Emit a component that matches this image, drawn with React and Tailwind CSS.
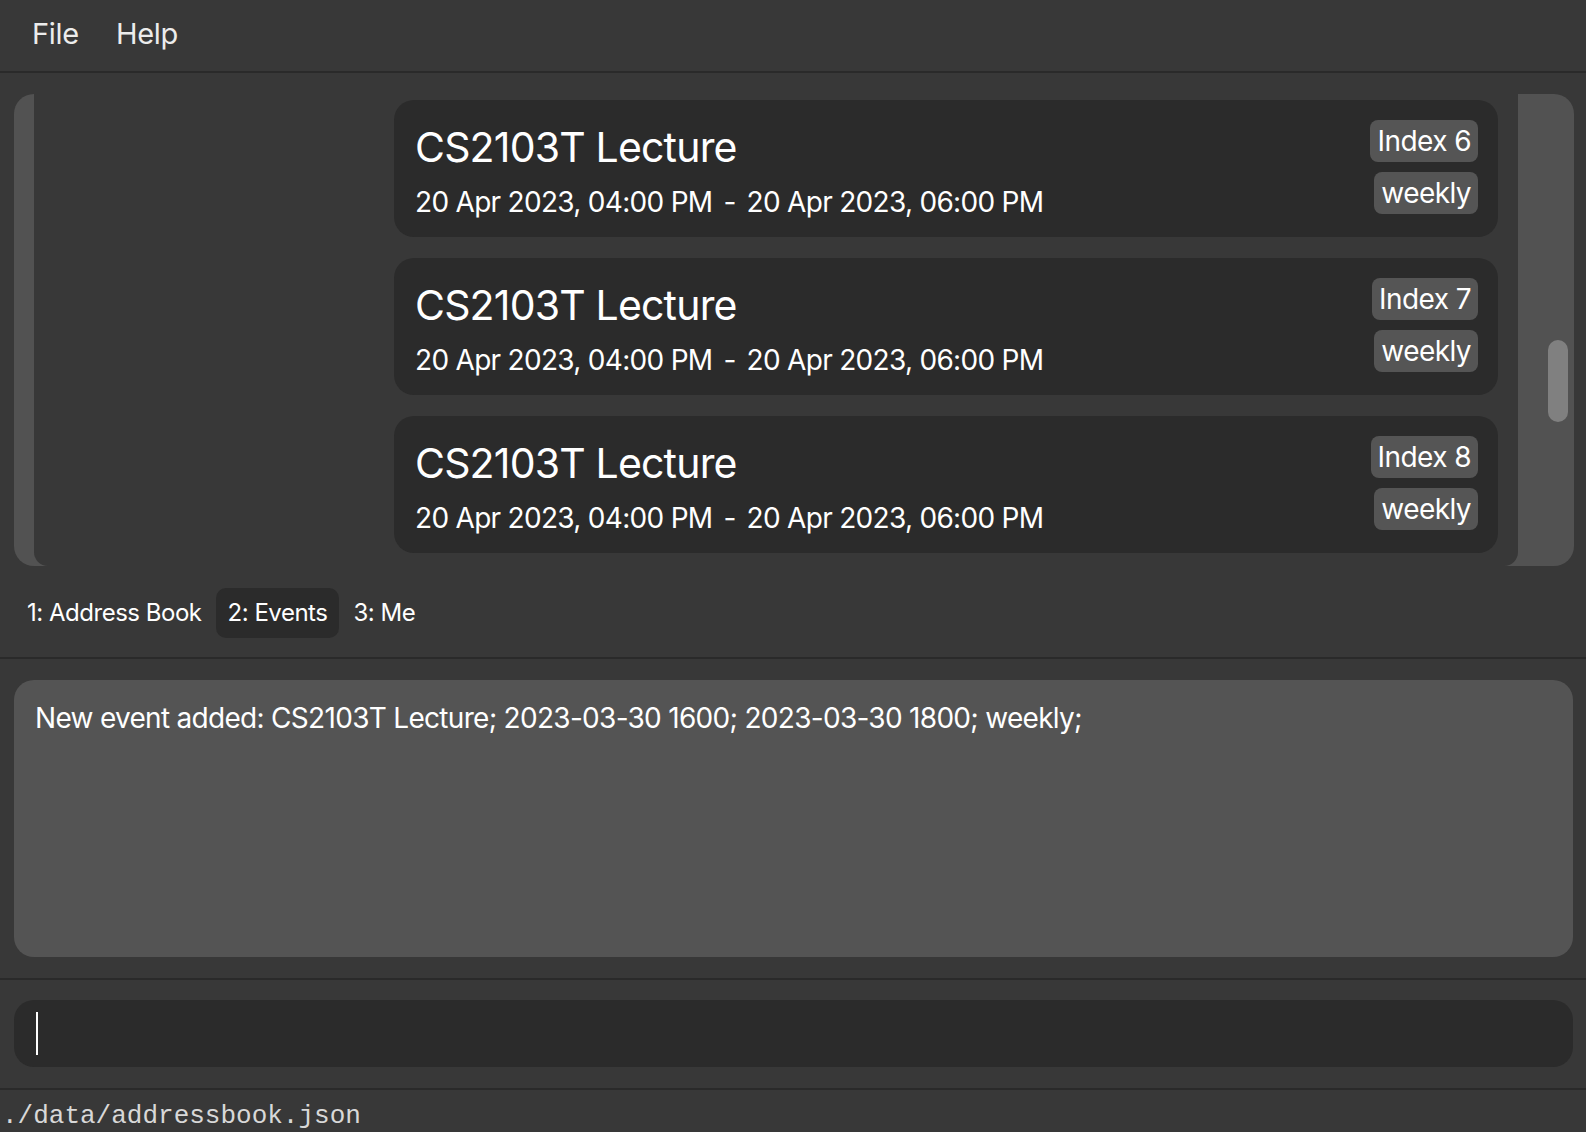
import React from 'react';

const events = [
  { index: 6 },
  { index: 7 },
  { index: 8 }
];

const tabs = ['1: Address Book', '2: Events', '3: Me'];

function EventCard ({ index }) {
  return (
    <div className="flex h-[137px] w-[1104px] shrink-0 items-start justify-between rounded-[20px] bg-[#2b2b2b] pl-[21px] pr-[20px] pt-[20px]">
      <div className="mt-[2px] flex flex-col">
        <div className="text-[41px] leading-[50px] tracking-[-0.02em] text-white">CS2103T Lecture</div>
        <div className="mt-[12px] flex text-[28px] leading-[36px] tracking-[-0.025em] text-white">
          <span>20 Apr 2023, 04:00 PM</span>
          <span className="mx-[11px]">-</span>
          <span>20 Apr 2023, 06:00 PM</span>
        </div>
      </div>
      <div className="flex flex-col items-end gap-[10px]">
        <span className="flex h-[42px] items-center rounded-[8px] bg-[#555555] px-[7px] text-[28px] tracking-[-0.02em] text-white">Index {index}</span>
        <span className="flex h-[42px] items-center rounded-[8px] bg-[#555555] px-[7px] text-[28px] tracking-[-0.02em] text-white">weekly</span>
      </div>
    </div>
  );
}

function App () {
  return (
    <div className="flex h-[1132px] w-full flex-col overflow-hidden bg-[#383838]" style={{ fontFamily: 'Inter, "Noto Sans", sans-serif' }}>
      <div className="flex h-[71px] shrink-0 items-center gap-[37px] pb-[3px] pl-[32px] text-[29px] tracking-[-0.01em] text-[#ececec]">
        <span>File</span>
        <span>Help</span>
      </div>
      <div className="h-[2px] shrink-0 bg-[#2a2a2a]" />

      <div className="flex shrink-0 flex-col pb-[19px] pl-[14px] pr-[12px] pt-[21px]">
        <div className="flex h-[472px] overflow-hidden rounded-[20px] bg-[#525252]">
          <div className="w-[20px] shrink-0" />
          <div className="flex flex-1 flex-col items-end gap-[21px] overflow-hidden rounded-b-[14px] bg-[#383838] pr-[20px] pt-[6px]">
            {events.map((e) => <EventCard key={e.index} index={e.index} />)}
          </div>
          <div className="flex w-[56px] shrink-0 flex-col pl-[30px] pt-[246px]">
            <div className="h-[82px] w-[20px] rounded-full bg-[#808080]" />
          </div>
        </div>
        <div className="mt-[22px] flex gap-[2px] pl-[1px]">
          {tabs.map((t, i) => (
            <span key={t} className={`flex h-[50px] items-center rounded-[10px] px-[12px] text-[24px] tracking-[-0.02em] text-white ${i === 1 ? 'bg-[#2b2b2b]' : ''}`}>{t}</span>
          ))}
        </div>
      </div>
      <div className="h-[2px] shrink-0 bg-[#2a2a2a]" />

      <div className="shrink-0 py-[21px] pl-[14px] pr-[13px]">
        <div className="h-[277px] rounded-[20px] bg-[#545454] px-[21px] pt-[17px] text-[28px] tracking-[-0.025em] text-white">
          New event added: CS2103T Lecture; 2023-03-30 1600; 2023-03-30 1800; weekly;
        </div>
      </div>
      <div className="h-[2px] shrink-0 bg-[#2a2a2a]" />

      <div className="shrink-0 pb-[21px] pl-[14px] pr-[13px] pt-[20px]">
        <div className="flex h-[67px] items-center rounded-[20px] bg-[#2b2b2b] pl-[22px]">
          <div className="h-[43px] w-[2px] bg-white" />
        </div>
      </div>
      <div className="h-[2px] shrink-0 bg-[#2a2a2a]" />

      <div className="flex flex-1 items-center pl-[2px] pt-[7px] text-[26px] text-[#d8d8d8]" style={{ fontFamily: '"Liberation Mono", monospace' }}>
        ./data/addressbook.json
      </div>
    </div>
  );
}

export default App;
